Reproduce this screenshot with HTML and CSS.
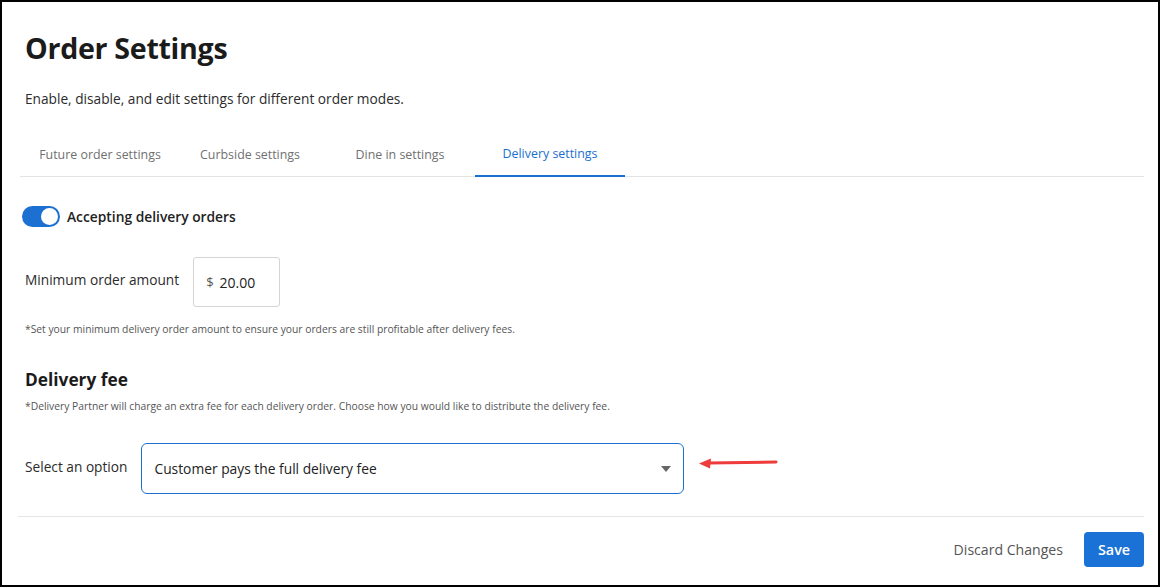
FILE: index.html
```html
<!DOCTYPE html>
<html>
<head>
<meta charset="utf-8">
<link rel="stylesheet" href="styles.css">
</head>
<body>
<div class="frame">
  <div class="page">
    <h1 class="title">Order Settings</h1>
    <p class="subtitle">Enable, disable, and edit settings for different order modes.</p>
    <div class="tabs">
      <div class="tab">Future order settings</div>
      <div class="tab">Curbside settings</div>
      <div class="tab">Dine in settings</div>
      <div class="tab active">Delivery settings</div>
    </div>
    <div class="toggle-row">
      <span class="toggle"><span class="knob"></span></span>
      <span class="toggle-label">Accepting delivery orders</span>
    </div>
    <div class="amount-row">
      <span class="field-label">Minimum order amount</span>
      <div class="amount-input"><span class="cur">$</span><span class="val">20.00</span></div>
    </div>
    <p class="note note-min">*Set your minimum delivery order amount to ensure your orders are still profitable after delivery fees.</p>
    <h2 class="section">Delivery fee</h2>
    <p class="note note-fee">*Delivery Partner will charge an extra fee for each delivery order. Choose how you would like to distribute the delivery fee.</p>
    <div class="select-row">
      <span class="field-label">Select an option</span>
      <div class="select">
        <span>Customer pays the full delivery fee</span>
        <span class="caret"></span>
      </div>
      <svg class="arrow" width="80" height="14" viewBox="0 0 80 14">
        <line x1="10" y1="6" x2="77" y2="5" stroke="#ee3b3b" stroke-width="3" stroke-linecap="round"/>
        <path d="M0 6.5 L12 1.5 L11 11.5 Z" fill="#ee3b3b"/>
      </svg>
    </div>
    <div class="footer">
      <span class="discard">Discard Changes</span>
      <span class="save">Save</span>
    </div>
  </div>
</div>
</body>
</html>
```
FILE: styles.css
```css
html, body {
  margin: 0;
  padding: 0;
  background: #fff;
}
.frame {
  width: 1160px;
  height: 587px;
  box-sizing: border-box;
  border: 2px solid #000;
  font-family: "Open Sans", "Noto Sans", sans-serif;
  color: #222;
  overflow: hidden;
}
.page {
  padding: 0 14px 0 14px;
}
.title {
  margin: 26px 0 0 9px;
  font-size: 28.6px;
  font-weight: 700;
  letter-spacing: -0.3px;
  color: #1b1b1b;
  line-height: 40px;
}
.subtitle {
  margin: 21px 0 0 9px;
  font-size: 13.7px;
  line-height: 20px;
  color: #2b2b2b;
}
.tabs {
  display: flex;
  margin: 22px 0 0 4px;
  padding-left: 5px;
  border-bottom: 1px solid #e3e3e3;
}
.tab {
  width: 150px;
  text-align: center;
  font-size: 12.4px;
  color: #707070;
  height: 46px;
  line-height: 48px;
  box-sizing: border-box;
  margin-bottom: -1px;
}
.tab.active {
  color: #1a6fcf;
  border-bottom: 2px solid #1a6fcf;
  line-height: 46px;
}
.toggle-row {
  display: flex;
  align-items: center;
  margin: 29px 0 0 6px;
  gap: 7px;
}
.toggle {
  position: relative;
  width: 38px;
  height: 21px;
  border-radius: 11px;
  background: #1c70d2;
  display: inline-block;
}
.knob {
  position: absolute;
  right: 2px;
  top: 2px;
  width: 17px;
  height: 17px;
  border-radius: 50%;
  background: #fff;
}
.toggle-label {
  font-size: 13.8px;
  font-weight: 600;
  color: #222;
}
.amount-row {
  display: flex;
  align-items: flex-start;
  margin: 30px 0 0 9px;
}
.field-label {
  font-size: 13.7px;
  color: #2b2b2b;
  line-height: 20px;
  padding-top: 13px;
}
.amount-input {
  margin-left: 14px;
  width: 87px;
  height: 50px;
  box-sizing: border-box;
  border: 1px solid #d4d4d4;
  border-radius: 3px;
  display: flex;
  align-items: center;
  padding-left: 12px;
}
.cur {
  font-size: 13px;
  color: #555;
  margin-right: 6px;
}
.val {
  font-size: 14px;
  color: #222;
}
.note {
  font-size: 10.3px;
  color: #555;
  margin: 0 0 0 9px;
  line-height: 15px;
}
.note-min {
  margin-top: 15px;
}
.section {
  margin: 30px 0 0 9px;
  font-size: 17.3px;
  font-weight: 700;
  color: #1b1b1b;
  line-height: 26px;
}
.note-fee {
  margin-top: 6px;
}
.select-row {
  display: flex;
  align-items: center;
  margin: 29px 0 0 9px;
}
.select-row .field-label {
  padding-top: 0;
  margin-top: -3px;
}
.select {
  margin-left: 14px;
  width: 543px;
  height: 51px;
  box-sizing: border-box;
  border: 1.5px solid #1c70d2;
  border-radius: 6px;
  display: flex;
  align-items: center;
  justify-content: space-between;
  padding: 0 12px 0 12px;
  font-size: 13.8px;
  color: #222;
}
.caret {
  width: 0;
  height: 0;
  border-left: 5px solid transparent;
  border-right: 5px solid transparent;
  border-top: 6px solid #666;
  margin-top: 1px;
}
.arrow {
  margin-left: 15px;
  margin-top: -10px;
}
.footer {
  margin: 22px 0 0 2px;
  border-top: 1px solid #e6e6e6;
  display: flex;
  justify-content: flex-end;
  align-items: center;
  padding-top: 15px;
  gap: 21px;
}
.discard {
  font-size: 14.1px;
  color: #555;
}
.save {
  background: #1b72d6;
  color: #fff;
  font-weight: 600;
  font-size: 14.3px;
  width: 60px;
  height: 35px;
  line-height: 35px;
  text-align: center;
  border-radius: 4px;
}
```
